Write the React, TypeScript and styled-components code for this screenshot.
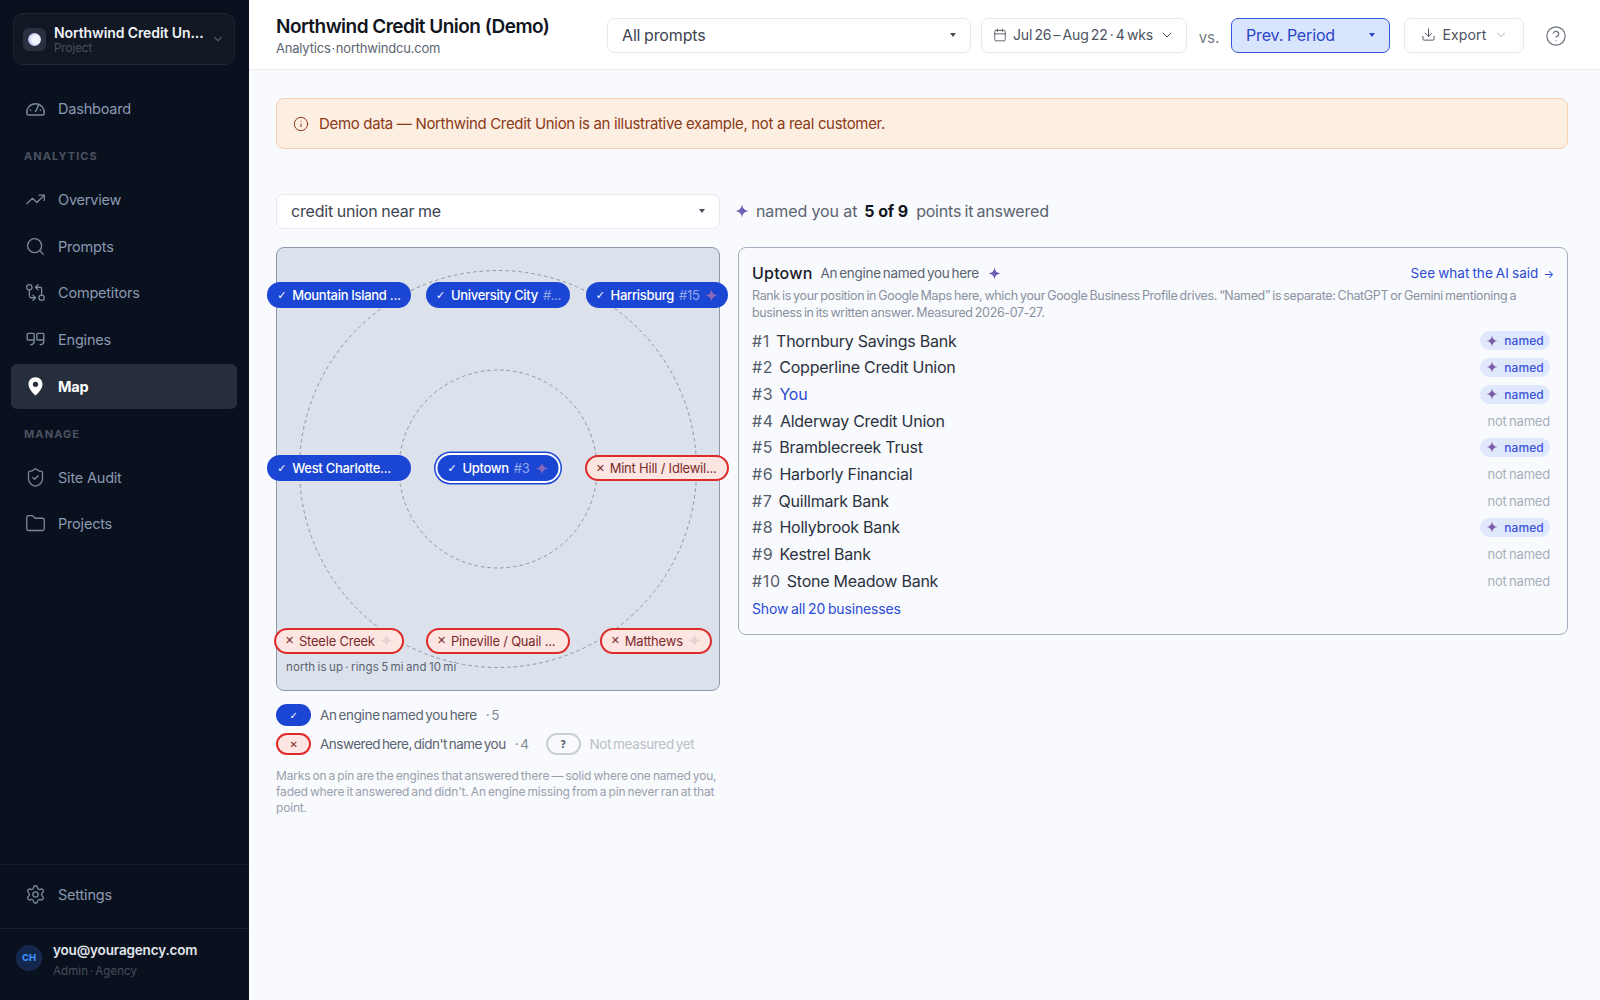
import React from "react";
import styled, { createGlobalStyle } from "styled-components";
import {
  TrendingUp, Search, GitCompareArrows, ShieldCheck, Folder, Settings,
  ChevronDown, Calendar, Download, CircleHelp, Info,
} from "lucide-react";

const Global = createGlobalStyle`
  html, body { margin: 0; padding: 0; height: 100%; }
  body { font-family: Inter, "Liberation Sans", sans-serif; background: #f8fafd; color: #1f2530; }
  * { box-sizing: border-box; }
`;

const Shell = styled.div`
  display: grid;
  grid-template-columns: 249px 1fr;
  height: 1000px;
  overflow: hidden;
`;

const Sidebar = styled.aside`
  background: #0a111e;
  display: flex;
  flex-direction: column;
  height: 1000px;
`;
const Switcher = styled.div`
  margin: 13px 14px 21px 13px;
  height: 52px;
  border: 1px solid #1f2735;
  border-radius: 10px;
  background: #111824;
  display: flex;
  align-items: center;
  padding: 0 9px;
  gap: 8px;
`;
const Favicon = styled.div`
  width: 23px;
  height: 23px;
  border-radius: 6px;
  background: #2a3040;
  display: flex;
  align-items: center;
  justify-content: center;
  flex: none;
`;
const FaviconDot = styled.div`
  width: 13px;
  height: 13px;
  border-radius: 50%;
  background: radial-gradient(circle at 58% 50%, #f4f6fd 0 38%, #9aa6ea 85%);
`;
const SwitchText = styled.div`
  flex: 1;
  min-width: 0;
  margin-top: 2px;
`;
const SwitchName = styled.div`
  font-size: 14px;
  font-weight: 600;
  color: #eef1f6;
  white-space: nowrap;
  line-height: 17px;
  letter-spacing: -0.1px;
`;
const SwitchSub = styled.div`
  font-size: 11.5px;
  color: #49515f;
  line-height: 15px;
`;
const NavGroup = styled.nav`
  display: flex;
  flex-direction: column;
  gap: 1.67px;
  padding: 0 12px 0 11px;
`;
const NavItem = styled.div<{ $active?: boolean }>`
  height: 45px;
  display: flex;
  align-items: center;
  gap: 12px;
  padding: 0 14px;
  border-radius: 6px;
  font-size: 14.5px;
  letter-spacing: -0.2px;
  font-weight: ${(p) => (p.$active ? 700 : 400)};
  color: ${(p) => (p.$active ? "#ffffff" : "#8a99b2")};
  background: ${(p) => (p.$active ? "#262d3b" : "transparent")};
  svg { width: 21px; height: 21px; flex: none; color: ${(p) => (p.$active ? "#ffffff" : "#7b8798")}; }
`;
const SectionLabel = styled.div`
  height: 46px;
  padding: 18px 0 0 24px;
  font-size: 11px;
  line-height: 14px;
  font-weight: 700;
  letter-spacing: 1.1px;
  color: #4a5261;
`;
const Spacer = styled.div`
  flex: 1;
`;
const SettingsBlock = styled.div`
  border-top: 1px solid #141b28;
  padding: 7px 0 11px;
`;
const UserBlock = styled.div`
  border-top: 1px solid #1a2130;
  height: 72px;
  display: flex;
  align-items: center;
  padding: 0 16px 8px;
  gap: 11px;
`;
const Avatar = styled.div`
  width: 26px;
  height: 26px;
  border-radius: 50%;
  background: #14274d;
  border: 1px solid #1d2f58;
  color: #3f8cf5;
  font-size: 9.5px;
  font-weight: 800;
  display: flex;
  align-items: center;
  justify-content: center;
  flex: none;
  margin-bottom: 6px;
`;
const UserMail = styled.div`
  font-size: 13.5px;
  font-weight: 600;
  color: #e2e6ec;
  line-height: 18px;
  letter-spacing: -0.15px;
`;
const UserRole = styled.div`
  font-size: 11.5px;
  color: #464e5c;
  line-height: 18px;
  margin-top: 3px;
  letter-spacing: 0.1px;
  word-spacing: -1.5px;
`;

const Main = styled.main`
  display: flex;
  flex-direction: column;
  min-width: 0;
`;
const TopBar = styled.header`
  height: 70px;
  background: #fff;
  border-bottom: 1px solid #e7eaef;
  display: flex;
  align-items: center;
  padding: 2px 32px 0 27px;
`;
const TitleBlock = styled.div`
  width: 331px;
  flex: none;
`;
const Title = styled.div`
  font-size: 19px;
  font-weight: 600;
  color: #11151d;
  letter-spacing: -0.52px;
  line-height: 25px;
  white-space: nowrap;
`;
const Sub = styled.div`
  font-size: 13px;
  color: #5d6572;
  line-height: 18px;
  letter-spacing: -0.2px;
  word-spacing: -2.6px;
`;
const SelectBox = styled.div<{ $width: number; $accent?: boolean }>`
  width: ${(p) => p.$width}px;
  height: 35px;
  flex: none;
  display: flex;
  align-items: center;
  justify-content: space-between;
  padding: 0 14px 2px;
  border-radius: 7px;
  border: 1px solid ${(p) => (p.$accent ? "#3558d8" : "#e6e9ef")};
  background: ${(p) => (p.$accent ? "#d9e4fd" : "#fff")};
  color: ${(p) => (p.$accent ? "#2a46c8" : "#3c4451")};
  font-size: 16px;
  letter-spacing: -0.15px;
  word-spacing: -0.6px;
  white-space: nowrap;
`;
const Caret = styled.span<{ $color?: string }>`
  width: 0;
  height: 0;
  border-left: 3.5px solid transparent;
  border-right: 3.5px solid transparent;
  border-top: 4px solid ${(p) => p.$color ?? "#444b57"};
  flex: none;
`;
const GhostButton = styled.div<{ $width: number; $ml: number; $tight?: boolean }>`
  width: ${(p) => p.$width}px;
  margin-left: ${(p) => p.$ml}px;
  height: 35px;
  flex: none;
  display: flex;
  align-items: center;
  justify-content: center;
  padding-bottom: 2px;
  gap: ${(p) => (p.$tight ? 6 : 7)}px;
  border-radius: 7px;
  border: 1px solid #e6e9ef;
  background: #fff;
  color: #4b5360;
  font-size: 14px;
  letter-spacing: ${(p) => (p.$tight ? "-0.15px" : "0.15px")};
  word-spacing: ${(p) => (p.$tight ? "-1.6px" : "0")};
  white-space: nowrap;
`;
const VsLabel = styled.div`
  width: 44px;
  text-align: center;
  font-size: 15px;
  color: #757d8a;
  margin-top: 3px;
`;
const HelpIcon = styled.div`
  margin-left: auto;
  display: flex;
  color: #6a7280;
  margin-right: 1px;
`;

const Content = styled.div`
  flex: 1;
  padding: 28px 32px 0 27px;
  background: #f8fafd;
`;
const Banner = styled.div`
  height: 51px;
  border: 1px solid #f7cfb2;
  border-radius: 8px;
  background: #fdeee2;
  color: #8a3a17;
  font-size: 15px;
  display: flex;
  align-items: center;
  gap: 10px;
  padding: 0 16px;
  letter-spacing: -0.33px;
`;
const QueryRow = styled.div`
  margin-top: 45px;
  display: flex;
  align-items: center;
  gap: 14px;
`;
const QueryText = styled.span`
  letter-spacing: -0.2px;
`;
const Summary = styled.div`
  display: flex;
  align-items: center;
  font-size: 16px;
  color: #5b6370;
  gap: 6px;
  white-space: nowrap;
  margin-top: -1px;
  margin-left: 1px;
`;
const SummaryLead = styled.span`
  letter-spacing: -0.1px;
  margin-left: 1px;
`;
const SummaryStrong = styled.strong`
  color: #11151d;
  font-weight: 700;
  letter-spacing: -0.1px;
  margin: 0 2px 0 1px;
`;
const SummaryTail = styled.span`
  letter-spacing: -0.2px;
  word-spacing: -1px;
`;
const Columns = styled.div`
  margin-top: 18px;
  display: grid;
  grid-template-columns: 444px 1fr;
  gap: 18px;
  align-items: start;
`;
const MapBox = styled.div`
  position: relative;
  height: 444px;
  background: #dce2ec;
  border: 1px solid #8f99ac;
  border-radius: 8px;
`;
const RingsSvg = styled.svg`
  position: absolute;
  inset: 0;
  width: 100%;
  height: 100%;
`;
const Pin = styled.div<{ $x: number; $y: number; $miss?: boolean; $current?: boolean; $w?: number }>`
  position: absolute;
  left: ${(p) => p.$x}%;
  top: ${(p) => p.$y}%;
  transform: translate(-50%, -50%);
  width: ${(p) => (p.$w ? `${p.$w}px` : "auto")};
  height: 26px;
  padding: 0 ${(p) => (p.$miss ? 9 : 10)}px;
  border-radius: 13px;
  display: flex;
  align-items: center;
  gap: ${(p) => (p.$miss ? 5 : 6)}px;
  font-size: 13px;
  white-space: nowrap;
  letter-spacing: ${(p) => (p.$miss ? "-0.22px" : "-0.3px")};
  font-weight: ${(p) => (p.$miss ? 400 : 500)};
  color: ${(p) => (p.$miss ? "#7b2b2b" : "#fff")};
  background: ${(p) => (p.$miss ? "#fde5e2" : "#1b46d3")};
  border: ${(p) => (p.$miss ? "2px solid #df2a2a" : "none")};
  ${(p) => (p.$current ? "box-shadow: 0 0 0 2px #fff, 0 0 0 3.5px #1b46d3;" : "")}
`;
const PinMark = styled.span`
  font-family: "DejaVu Sans", sans-serif;
  font-size: 11px;
  flex: none;
`;
const PinLabel = styled.span`
  min-width: 0;
  flex: 1;
`;
const PinRank = styled.span`
  color: #93a8ea;
  font-weight: 400;
  margin-left: 5px;
`;
const MapCaption = styled.div`
  position: absolute;
  left: 9px;
  bottom: 16px;
  font-size: 11.5px;
  color: #5b6371;
  letter-spacing: 0.1px;
  word-spacing: -1px;
`;
const Legend = styled.div`
  margin-top: 13px;
  display: flex;
  flex-direction: column;
  gap: 7px;
`;
const LegendRow = styled.div`
  display: flex;
  align-items: center;
  font-size: 13.5px;
  color: #5b6370;
  letter-spacing: -0.35px;
  word-spacing: -1.5px;
  white-space: nowrap;
`;
const LegendChip = styled.span<{ $kind: "hit" | "miss" | "none" }>`
  width: 35px;
  height: 22px;
  border-radius: 11px;
  flex: none;
  display: flex;
  align-items: center;
  justify-content: center;
  font-family: "DejaVu Sans", sans-serif;
  font-size: 10px;
  font-weight: 700;
  margin-right: 9px;
  background: ${(p) => (p.$kind === "hit" ? "#1b46d3" : p.$kind === "miss" ? "#fde5e2" : "#f8fafd")};
  color: ${(p) => (p.$kind === "hit" ? "#fff" : p.$kind === "miss" ? "#7b2b2b" : "#5b6370")};
  border: ${(p) => (p.$kind === "hit" ? "none" : p.$kind === "miss" ? "2px solid #df2a2a" : "2px solid #c9ced7")};
`;
const LegendTight = styled.span`
  letter-spacing: -0.5px;
`;
const LegendCount = styled.span`
  color: #818997;
  margin-left: 9px;
`;
const LegendGap = styled.span`
  width: 17px;
`;
const LegendFaint = styled.span`
  color: #b9bfc9;
`;
const Note = styled.p`
  margin: 13px 0 0;
  font-size: 12px;
  line-height: 15.8px;
  color: #98a0ad;
  letter-spacing: -0.18px;
  word-spacing: -1px;
`;
const Card = styled.section`
  height: 388px;
  background: #f8fafe;
  border: 1.5px solid #a5aec0;
  border-radius: 8px;
  padding: 14px 13px;
`;
const CardHead = styled.div`
  display: flex;
  align-items: center;
  height: 22px;
`;
const CardTitle = styled.span`
  font-size: 16px;
  font-weight: 500;
  color: #1b2029;
  letter-spacing: 0.2px;
  margin-right: 8px;
`;
const CardTag = styled.span`
  font-size: 13.5px;
  color: #5b6370;
  letter-spacing: -0.3px;
  word-spacing: -1.4px;
  margin-right: 9px;
`;
const CardLink = styled.a`
  margin-left: auto;
  font-size: 13.5px;
  color: #2b49d6;
  letter-spacing: 0.05px;
  word-spacing: -0.8px;
`;
const LinkArrow = styled.span`
  font-size: 11px;
  margin-left: 2px;
`;
const CardDesc = styled.p`
  margin: 3px 0 0;
  font-size: 12.5px;
  line-height: 17px;
  color: #8a919e;
  letter-spacing: -0.35px;
  word-spacing: -1px;
`;
const RankList = styled.div`
  margin-top: 6.5px;
  display: flex;
  flex-direction: column;
`;
const RankRow = styled.div`
  height: 26.67px;
  display: flex;
  align-items: center;
  justify-content: space-between;
  font-size: 16px;
  color: #2c323d;
  padding-right: 4px;
`;
const RankNo = styled.span`
  color: #555d6a;
  margin-right: 6px;
  letter-spacing: 0.7px;
`;
const RankName = styled.span<{ $you?: boolean }>`
  color: ${(p) => (p.$you ? "#2b49d6" : "#2c323d")};
  letter-spacing: -0.25px;
`;
const NamedBadge = styled.span`
  width: 70px;
  height: 19px;
  border-radius: 10px;
  background: #e0e8fd;
  color: #3a54d6;
  font-size: 12px;
  font-weight: 500;
  letter-spacing: 0.1px;
  display: flex;
  align-items: center;
  justify-content: center;
  gap: 6px;
`;
const NotNamed = styled.span`
  font-size: 13px;
  color: #a9afba;
  letter-spacing: -0.2px;
  word-spacing: -1px;
`;
const ShowAll = styled.a`
  display: block;
  margin-top: 6px;
  font-size: 14px;
  color: #2b49d6;
  letter-spacing: -0.15px;
  word-spacing: -1px;
`;

const Sparkle = ({ size = 12, color = "#6f5fb5" }: { size?: number; color?: string }) => (
  <svg width={size} height={size} viewBox="0 0 24 24" style={{ flex: "none" }}>
    <path d="M12 1C12.9 7.6 16.4 11.1 23 12C16.4 12.9 12.9 16.4 12 23C11.1 16.4 7.6 12.9 1 12C7.6 11.1 11.1 7.6 12 1Z" fill={color} />
  </svg>
);

const DomeGauge = () => (
  <svg viewBox="0 0 24 24" fill="none" stroke="currentColor" strokeWidth="1.6" strokeLinecap="round" strokeLinejoin="round">
    <path d="M3.4 19.5h17.2c.6 0 1.1-.4 1.2-1A10 10 0 1 0 2.2 18.5c.1.6.6 1 1.2 1Z" />
    <path d="M12 15.500 15.500 8.500" />
    <path d="M6 14h.6M17.400 14h.6" />
  </svg>
);
const NinesIcon = () => (
  <svg viewBox="0 0 24 24" fill="none" stroke="currentColor" strokeWidth="1.6" strokeLinecap="round" strokeLinejoin="round">
    <path d="M10.500 12.500H3.500a1 1 0 0 1-1-1V6a1 1 0 0 1 1-1h6a1 1 0 0 1 1 1v7.500c0 2.800-1.500 4.500-4 4.500" />
    <path d="M21.500 12.500h-7a1 1 0 0 1-1-1V6a1 1 0 0 1 1-1h6a1 1 0 0 1 1 1v7.500c0 2.800-1.500 4.500-4 4.500" />
  </svg>
);
const SolidPin = () => (
  <svg viewBox="0 0 24 24">
    <path d="M12 1.500c-4.700 0-8 3.500-8 8 0 5.300 5.500 10.600 7.200 12.300.5.400 1.100.4 1.600 0C14.500 20.100 20 14.800 20 9.500c0-4.500-3.300-8-8-8Z" fill="#fff" />
    <circle cx="12" cy="9.500" r="3" fill="#262d3b" />
  </svg>
);

const pins = [
  { x: 14.1, y: 10.7, name: "Mountain Island ...", w: 144 },
  { x: 50, y: 10.7, name: "University City", rank: "#...", w: 144 },
  { x: 85.9, y: 10.7, name: "Harrisburg", rank: "#15", spark: true, w: 142 },
  { x: 14.1, y: 49.8, name: "West Charlotte...", w: 144 },
  { x: 50, y: 49.8, name: "Uptown", rank: "#3", spark: true, current: true },
  { x: 85.9, y: 49.8, name: "Mint Hill / Idlewil...", miss: true, w: 144 },
  { x: 14, y: 88.9, name: "Steele Creek", miss: true, spark: true },
  { x: 50, y: 88.9, name: "Pineville / Quail ...", miss: true, w: 144 },
  { x: 85.7, y: 88.9, name: "Matthews", miss: true, spark: true },
];

const ranks = [
  ["#1", "Thornbury Savings Bank", true],
  ["#2", "Copperline Credit Union", true],
  ["#3", "You", true],
  ["#4", "Alderway Credit Union", false],
  ["#5", "Bramblecreek Trust", true],
  ["#6", "Harborly Financial", false],
  ["#7", "Quillmark Bank", false],
  ["#8", "Hollybrook Bank", true],
  ["#9", "Kestrel Bank", false],
  ["#10", "Stone Meadow Bank", false],
] as const;

export default function App() {
  return (
    <Shell>
      <Global />
      <Sidebar>
        <Switcher>
          <Favicon><FaviconDot /></Favicon>
          <SwitchText>
            <SwitchName>Northwind Credit Un...</SwitchName>
            <SwitchSub>Project</SwitchSub>
          </SwitchText>
          <ChevronDown size={14} color="#4e5666" />
        </Switcher>
        <NavGroup>
          <NavItem><DomeGauge />Dashboard</NavItem>
        </NavGroup>
        <SectionLabel>ANALYTICS</SectionLabel>
        <NavGroup>
          <NavItem><TrendingUp strokeWidth={1.5} />Overview</NavItem>
          <NavItem><Search strokeWidth={1.5} />Prompts</NavItem>
          <NavItem><GitCompareArrows strokeWidth={1.5} />Competitors</NavItem>
          <NavItem><NinesIcon />Engines</NavItem>
          <NavItem $active><SolidPin />Map</NavItem>
        </NavGroup>
        <SectionLabel>MANAGE</SectionLabel>
        <NavGroup>
          <NavItem><ShieldCheck strokeWidth={1.5} />Site Audit</NavItem>
          <NavItem><Folder strokeWidth={1.5} />Projects</NavItem>
        </NavGroup>
        <Spacer />
        <SettingsBlock>
          <NavGroup>
            <NavItem><Settings strokeWidth={1.5} />Settings</NavItem>
          </NavGroup>
        </SettingsBlock>
        <UserBlock>
          <Avatar>CH</Avatar>
          <div>
            <UserMail>you@youragency.com</UserMail>
            <UserRole>Admin · Agency</UserRole>
          </div>
        </UserBlock>
      </Sidebar>
      <Main>
        <TopBar>
          <TitleBlock>
            <Title>Northwind Credit Union (Demo)</Title>
            <Sub>Analytics · northwindcu.com</Sub>
          </TitleBlock>
          <SelectBox $width={364}>All prompts<Caret /></SelectBox>
          <GhostButton $width={206} $ml={10} $tight>
            <Calendar size={14} strokeWidth={1.5} />Jul 26 – Aug 22 · 4 wks<ChevronDown size={16} strokeWidth={1.5} />
          </GhostButton>
          <VsLabel>vs.</VsLabel>
          <SelectBox $width={159} $accent>Prev. Period<Caret $color="#2a46c8" /></SelectBox>
          <GhostButton $width={120} $ml={14}>
            <Download size={15} strokeWidth={1.5} />Export<ChevronDown size={14} strokeWidth={1.5} color="#9aa1ad" />
          </GhostButton>
          <HelpIcon><CircleHelp size={22} strokeWidth={1.3} /></HelpIcon>
        </TopBar>
        <Content>
          <Banner>
            <Info size={16} strokeWidth={1.5} />
            Demo data — Northwind Credit Union is an illustrative example, not a real customer.
          </Banner>
          <QueryRow>
            <SelectBox $width={444}><QueryText>credit union near me</QueryText><Caret /></SelectBox>
            <Summary>
              <Sparkle size={14} />
              <SummaryLead>named you at</SummaryLead>
              <SummaryStrong>5 of 9</SummaryStrong>
              <SummaryTail>points it answered</SummaryTail>
            </Summary>
          </QueryRow>
          <Columns>
            <div>
              <MapBox>
                <RingsSvg viewBox="0 0 442 442">
                  <circle cx="221" cy="221" r="198.500" fill="none" stroke="#8d97a8" strokeDasharray="3.5 3" />
                  <circle cx="221" cy="221" r="99" fill="none" stroke="#8d97a8" strokeDasharray="3.5 3" />
                </RingsSvg>
                {pins.map((p) => (
                  <Pin key={p.name} $x={p.x} $y={p.y} $miss={p.miss} $current={p.current} $w={p.w}>
                    <PinMark>{p.miss ? "✕" : "✓"}</PinMark>
                    <PinLabel>{p.name}{p.rank ? <PinRank>{p.rank}</PinRank> : null}</PinLabel>
                    {p.spark ? <Sparkle size={13} color={p.miss ? "#e8cfd0" : "#8a68b8"} /> : null}
                  </Pin>
                ))}
                <MapCaption>north is up · rings 5 mi and 10 mi</MapCaption>
              </MapBox>
              <Legend>
                <LegendRow><LegendChip $kind="hit">✓</LegendChip>An engine named you here<LegendCount>· 5</LegendCount></LegendRow>
                <LegendRow>
                  <LegendChip $kind="miss">✕</LegendChip><LegendTight>Answered here, didn't name you</LegendTight><LegendCount>· 4</LegendCount>
                  <LegendGap />
                  <LegendChip $kind="none">?</LegendChip><LegendFaint>Not measured yet</LegendFaint>
                </LegendRow>
              </Legend>
              <Note>Marks on a pin are the engines that answered there — solid where one named you, faded where it answered and didn't. An engine missing from a pin never ran at that point.</Note>
            </div>
            <Card>
              <CardHead>
                <CardTitle>Uptown</CardTitle>
                <CardTag>An engine named you here</CardTag>
                <Sparkle size={13} />
                <CardLink>See what the AI said <LinkArrow>→</LinkArrow></CardLink>
              </CardHead>
              <CardDesc>Rank is your position in Google Maps here, which your Google Business Profile drives. “Named” is separate: ChatGPT or Gemini mentioning a business in its written answer. Measured 2026-07-27.</CardDesc>
              <RankList>
                {ranks.map(([no, name, named]) => (
                  <RankRow key={no}>
                    <span><RankNo>{no}</RankNo><RankName $you={name === "You"}>{name}</RankName></span>
                    {named ? <NamedBadge><Sparkle size={12} color="#7d5ea8" />named</NamedBadge> : <NotNamed>not named</NotNamed>}
                  </RankRow>
                ))}
              </RankList>
              <ShowAll>Show all 20 businesses</ShowAll>
            </Card>
          </Columns>
        </Content>
      </Main>
    </Shell>
  );
}
